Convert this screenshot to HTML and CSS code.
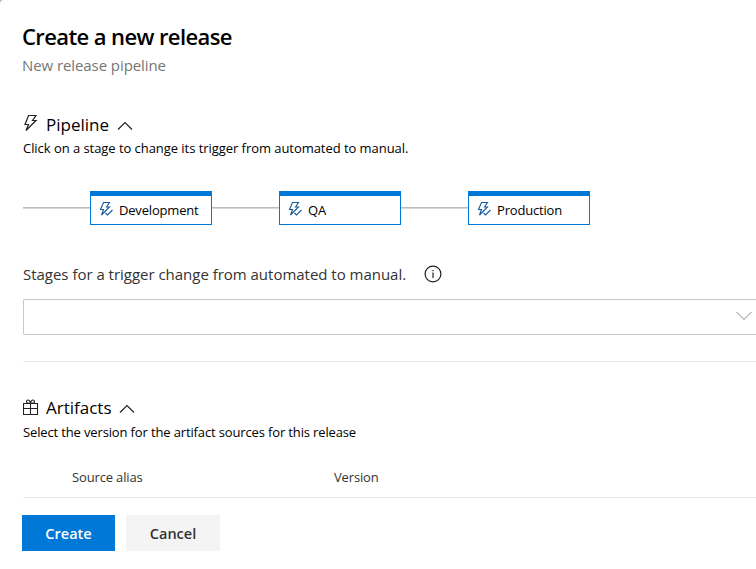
FILE: index.html
```html
<!DOCTYPE html>
<html lang="en">
<head>
<meta charset="utf-8">
<title>Create a new release</title>
<link rel="stylesheet" href="styles.css">
</head>
<body>
<main class="panel">
  <header class="header">
    <h1 class="title"><span>Create a new release</span></h1>
    <p class="subtitle"><span>New release pipeline</span></p>
  </header>

  <section class="pipeline">
    <h2 class="section-title">
      <svg class="section-icon" viewBox="0 0 16 18"><path d="M5.500 1.500H13L9.500 6.500H13L3 16.500L5.500 10.500H2Z"/></svg>
      <span>Pipeline</span>
      <svg class="chevron" viewBox="0 0 16 10"><path d="M1 8.500L8 1.500L15 8.500"/></svg>
    </h2>
    <p class="description desc-pipeline"><span>Click on a stage to change its trigger from automated to manual.</span></p>
    <div class="stages">
      <span class="connector"></span>
      <button class="stage"><svg class="stage-icon" viewBox="0 0 15 16"><path d="M4.500 1.500H10.500L7.500 6H10.500L2.500 14L4.500 8.500H1.500ZM6.500 12L8.500 14L13.500 9"/></svg><span>Development</span></button>
      <span class="connector"></span>
      <button class="stage"><svg class="stage-icon" viewBox="0 0 15 16"><path d="M4.500 1.500H10.500L7.500 6H10.500L2.500 14L4.500 8.500H1.500ZM6.500 12L8.500 14L13.500 9"/></svg><span>QA</span></button>
      <span class="connector"></span>
      <button class="stage"><svg class="stage-icon" viewBox="0 0 15 16"><path d="M4.500 1.500H10.500L7.500 6H10.500L2.500 14L4.500 8.500H1.500ZM6.500 12L8.500 14L13.500 9"/></svg><span>Production</span></button>
    </div>
    <div class="field-label">
      <span class="label-text">Stages for a trigger change from automated to manual.</span>
      <svg class="info" viewBox="0 0 18 18"><circle cx="9" cy="9" r="7.900"/><path d="M9 7.500V13M9 5V6.200"/></svg>
    </div>
    <div class="select">
      <svg class="select-arrow" viewBox="0 0 16 10"><path d="M.5 1L8 8.500L15.500 1"/></svg>
    </div>
  </section>

  <section class="artifacts">
    <h2 class="section-title">
      <svg class="section-icon gift" viewBox="0 0 16 18"><path d="M.5 4.500H14.500V15.500H.5ZM.5 9.500H14.500M7.500 4.500V15.500M7.500 4.500C5 4.500 3.500 4 3.500 2.500C3.500 .5 7 0 7.500 4.500C8 0 11.500 .5 11.500 2.500C11.500 4 10 4.500 7.500 4.500Z"/></svg>
      <span>Artifacts</span>
      <svg class="chevron" viewBox="0 0 16 10"><path d="M1 8.500L8 1.500L15 8.500"/></svg>
    </h2>
    <p class="description desc-artifacts"><span>Select the version for the artifact sources for this release</span></p>
    <div class="columns">
      <span>Source alias</span>
      <span>Version</span>
    </div>
  </section>

  <footer class="actions">
    <button class="button primary"><span>Create</span></button>
    <button class="button"><span>Cancel</span></button>
  </footer>
</main>
</body>
</html>
```
FILE: styles.css
```css
* { box-sizing: border-box; }
body {
  margin: 0;
  background: #b8b8b8;
  font-family: "Open Sans", "Noto Sans", sans-serif;
  color: #000;
}
h1, h2, p { margin: 0; }
button { font: inherit; padding: 0; border: 0; color: inherit; }
svg { display: block; flex: none; fill: none; stroke: #222; stroke-width: 1.2; }
span { white-space: nowrap; }
.panel {
  height: 569px;
  padding: 21px 0 0 23px;
  background: #fff;
  border-top-left-radius: 4px;
  overflow: hidden;
}
.header { height: 89px; margin-left: -1px; }
.title { font-size: 22px; line-height: 30px; font-weight: 600; letter-spacing: -.6px; }
.subtitle { margin-top: 1px; font-size: 15px; line-height: 27px; letter-spacing: -.08px; color: #767676; }
.section-title { display: flex; align-items: center; height: 28px; font-size: 17px; font-weight: 400; }
.section-icon { width: 16px; height: 18px; margin: -2px 7px 0 0; }
.section-icon.gift { margin-top: 0; stroke-width: 1.1; }
.chevron { width: 16px; height: 10px; margin: 3px 0 0 8px; }
.artifacts .chevron { margin-left: 7px; }
.description { font-size: 13px; line-height: 18px; padding-top: 1px; }
.desc-pipeline { letter-spacing: -.05px; }
.desc-artifacts { letter-spacing: -.14px; }
.stages { display: flex; align-items: center; margin-top: 34px; height: 34px; }
.connector { width: 67px; height: 2px; background: linear-gradient(#bdbdbd 50%, #d8d8d8 50%); }
.stage {
  display: flex;
  align-items: center;
  width: 122px;
  height: 34px;
  padding-left: 8px;
  background: #fff;
  border: 1px solid #0078d7;
  border-top-width: 5px;
  font-size: 13px;
  letter-spacing: -.18px;
}
.stage-icon { width: 15px; height: 16px; margin: -2px 5px 0 0; stroke: #175b9c; stroke-width: 1.1; }
.field-label { display: flex; align-items: center; height: 26px; margin-top: 36px; font-size: 15px; letter-spacing: -.02px; color: #333; }
.info { width: 18px; height: 18px; margin-left: 18px; }
.select {
  display: flex;
  align-items: center;
  justify-content: flex-end;
  height: 36px;
  margin-top: 12px;
  padding: 0 4px 3px 0;
  border: 1px solid #c8c8c8;
  border-right: 0;
  border-radius: 2px 0 0 2px;
}
.select-arrow { width: 16px; height: 10px; stroke: #8c8782; stroke-width: 1; }
.artifacts { margin-top: 26px; padding-top: 31px; border-top: 1px solid #eaeaea; }
.columns {
  display: grid;
  grid-template-columns: 262px 1fr;
  align-items: center;
  height: 42px;
  margin-top: 15px;
  padding-left: 49px;
  border-bottom: 1px solid #eaeaea;
  font-size: 13px;
  letter-spacing: -.15px;
  color: #333;
}
.artifacts .section-title { height: 29px; }
.actions { display: flex; gap: 11px; margin: 17px 0 0 -1px; }
.button { width: 94px; height: 36px; background: #f4f4f4; font-size: 14.500px; font-weight: 600; color: #333; }
.button.primary { width: 93px; background: #0078d7; color: #fff; }
```
